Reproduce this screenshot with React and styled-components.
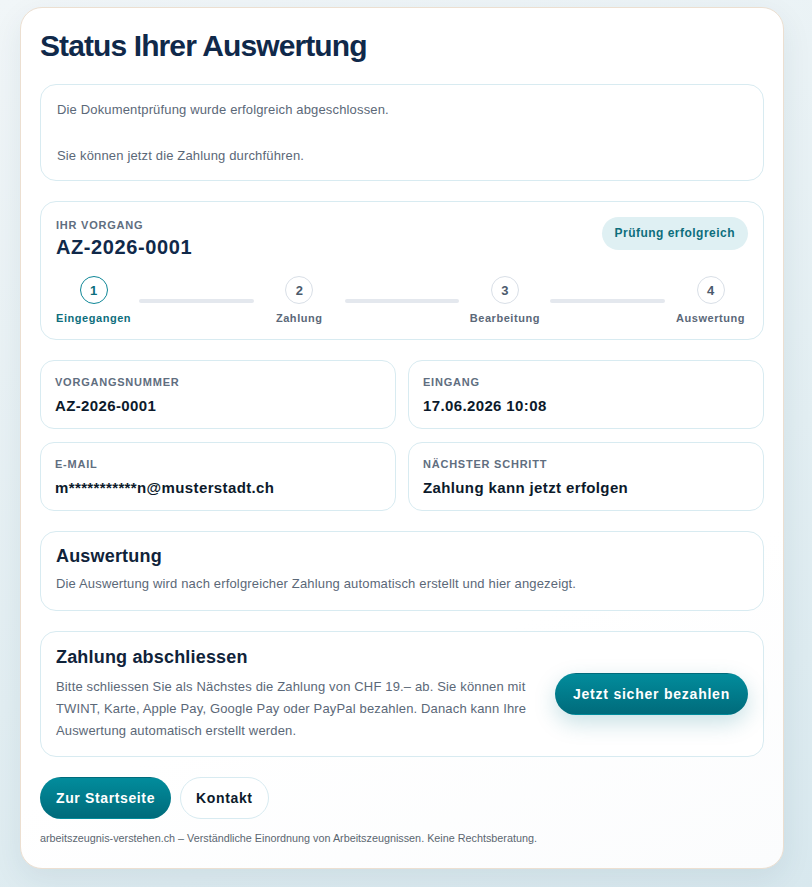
import { Fragment } from "react"
import styled, { createGlobalStyle } from "styled-components"

const GlobalStyle = createGlobalStyle`
  * {
    box-sizing: border-box;
  }

  body {
    margin: 0;
    font-family: "Liberation Sans", Arial, sans-serif;
    background: linear-gradient(160deg, #f1f6f8 0%, #e2eef2 60%, #d8e8ee 100%);
    min-height: 100vh;
  }
`

const Page = styled.div`
  padding: 7px 28px 19px 20px;
`

const Card = styled.main`
  background: linear-gradient(160deg, #ffffff 0%, #ffffff 70%, #fbfcfd 100%);
  border: 1px solid #ecdfd1;
  border-radius: 22px;
  box-shadow: 0 10px 30px rgba(30, 70, 90, 0.08);
  padding: 20px 19px 22px;
  display: flex;
  flex-direction: column;
  gap: 20px;
`

const Title = styled.h1`
  margin: 0;
  font-size: 30px;
  line-height: 36px;
  font-weight: 700;
  letter-spacing: -0.03em;
  color: #10294a;
`

const Box = styled.section`
  border: 1px solid #d8ebf1;
  border-radius: 16px;
  background: #fff;
  padding: ${(p) => p.$padding || "13px 16px"};
`

const Notice = styled.p`
  margin: 0;
  font-size: 13px;
  line-height: 23px;
  letter-spacing: 0.012em;
  color: #5b6878;
`

const ProcessHead = styled.div`
  display: flex;
  justify-content: space-between;
  align-items: flex-start;
`

const Label = styled.div`
  font-size: 11px;
  line-height: 16px;
  font-weight: 700;
  text-transform: uppercase;
  letter-spacing: 0.07em;
  color: #5f6e80;
`

const CaseId = styled.div`
  margin-top: 2px;
  font-size: 20px;
  line-height: 24px;
  font-weight: 700;
  letter-spacing: 0.03em;
  color: #10294a;
`

const Badge = styled.span`
  background: #dff0f3;
  color: #0d6e7c;
  font-size: 12px;
  line-height: 15px;
  font-weight: 700;
  letter-spacing: 0.04em;
  padding: 9px 13px;
  border-radius: 999px;
`

const Steps = styled.div`
  display: flex;
  align-items: center;
  gap: 8px;
  margin-top: 17px;
`

const Step = styled.div`
  flex: 0 0 75px;
  display: flex;
  flex-direction: column;
  align-items: center;
  gap: 7px;
`

const Dot = styled.span`
  width: 28px;
  height: 28px;
  border-radius: 50%;
  display: flex;
  align-items: center;
  justify-content: center;
  background: #fff;
  border: 1.5px solid ${(p) => (p.$active ? "#0f8797" : "#d9dfe7")};
  color: ${(p) => (p.$active ? "#0d6e7c" : "#4b5a6c")};
  font-size: 13px;
  font-weight: 700;
`

const StepName = styled.span`
  font-size: 11px;
  line-height: 14px;
  font-weight: 700;
  letter-spacing: 0.05em;
  white-space: nowrap;
  color: ${(p) => (p.$active ? "#0d6e7c" : "#5b6878")};
`

const Track = styled.span`
  flex: 1;
  height: 4px;
  border-radius: 2px;
  background: #e4e8ee;
`

const Facts = styled.div`
  display: grid;
  grid-template-columns: 1fr 1fr;
  gap: 13px 12px;
`

const Fact = styled.div`
  border: 1px solid #d8ebf1;
  border-radius: 14px;
  padding: 13px 14px 12px;
`

const Value = styled.div`
  margin-top: 6px;
  font-size: 15px;
  line-height: 20px;
  font-weight: 700;
  letter-spacing: 0.025em;
  color: #0c1a2b;
`

const SectionTitle = styled.h2`
  margin: 0;
  font-size: 18px;
  line-height: 22px;
  font-weight: 700;
  letter-spacing: 0.01em;
  color: #10233a;
`

const Text = styled.p`
  margin: ${(p) => p.$gap || "6px"} 0 0;
  font-size: 13px;
  line-height: 22px;
  letter-spacing: 0.012em;
  color: #5b6878;
`

const PayRow = styled.div`
  display: flex;
  align-items: center;
  gap: 24px;
`

const PayText = styled.div`
  flex: 1;
`

const Button = styled.a`
  display: inline-block;
  flex-shrink: 0;
  padding: 11px ${(p) => p.$pad || "15px"};
  border-radius: 999px;
  font-size: 14px;
  line-height: 18px;
  font-weight: 700;
  letter-spacing: ${(p) => p.$spacing || "0.045em"};
  text-decoration: none;
  cursor: pointer;
  white-space: nowrap;
  color: ${(p) => (p.$ghost ? "#0c1a2b" : "#fff")};
  background: ${(p) =>
    p.$ghost ? "#fff" : "linear-gradient(180deg, #028c9c 0%, #006b7b 100%)"};
  border: 1px solid ${(p) => (p.$ghost ? "#d8ebf1" : "transparent")};
  box-shadow: ${(p) => (p.$glow ? "0 8px 22px rgba(0, 120, 135, 0.22)" : "none")};
`

const Actions = styled.div`
  display: flex;
  gap: 9px;
`

const Footer = styled.p`
  margin: -9px 0 0;
  font-size: 10.8px;
  line-height: 16px;
  color: #5b6670;
`

const steps = ["Eingegangen", "Zahlung", "Bearbeitung", "Auswertung"]

const facts = [
  ["Vorgangsnummer", "AZ-2026-0001"],
  ["Eingang", "17.06.2026 10:08"],
  ["E-Mail", "m***********n@musterstadt.ch"],
  ["Nächster Schritt", "Zahlung kann jetzt erfolgen"],
]

const App = () => {
  return (
    <Page>
      <GlobalStyle />
      <Card>
        <Title>Status Ihrer Auswertung</Title>

        <Box>
          <Notice>
            Die Dokumentprüfung wurde erfolgreich abgeschlossen.
            <br />
            <br />
            Sie können jetzt die Zahlung durchführen.
          </Notice>
        </Box>

        <Box $padding="15px 15px 14px">
          <ProcessHead>
            <div>
              <Label>Ihr Vorgang</Label>
              <CaseId>AZ-2026-0001</CaseId>
            </div>
            <Badge>Prüfung erfolgreich</Badge>
          </ProcessHead>
          <Steps>
            {steps.map((name, i) => (
              <Fragment key={name}>
                {i > 0 && <Track />}
                <Step>
                  <Dot $active={i === 0}>{i + 1}</Dot>
                  <StepName $active={i === 0}>{name}</StepName>
                </Step>
              </Fragment>
            ))}
          </Steps>
        </Box>

        <Facts>
          {facts.map(([label, value]) => (
            <Fact key={label}>
              <Label>{label}</Label>
              <Value>{value}</Value>
            </Fact>
          ))}
        </Facts>

        <Box $padding="13px 15px 15px">
          <SectionTitle>Auswertung</SectionTitle>
          <Text>
            Die Auswertung wird nach erfolgreicher Zahlung automatisch erstellt
            und hier angezeigt.
          </Text>
        </Box>

        <Box $padding="14px 15px 14px">
          <PayRow>
            <PayText>
              <SectionTitle>Zahlung abschliessen</SectionTitle>
              <Text $gap="8px">
                Bitte schliessen Sie als Nächstes die Zahlung von CHF 19.– ab.
                Sie können mit TWINT, Karte, Apple Pay, Google Pay oder PayPal
                bezahlen. Danach kann Ihre Auswertung automatisch erstellt
                werden.
              </Text>
            </PayText>
            <Button $pad="17px" $spacing="0.055em" $glow>
              Jetzt sicher bezahlen
            </Button>
          </PayRow>
        </Box>

        <Actions>
          <Button>Zur Startseite</Button>
          <Button $ghost>Kontakt</Button>
        </Actions>

        <Footer>
          arbeitszeugnis-verstehen.ch – Verständliche Einordnung von
          Arbeitszeugnissen. Keine Rechtsberatung.
        </Footer>
      </Card>
    </Page>
  )
}

export default App
